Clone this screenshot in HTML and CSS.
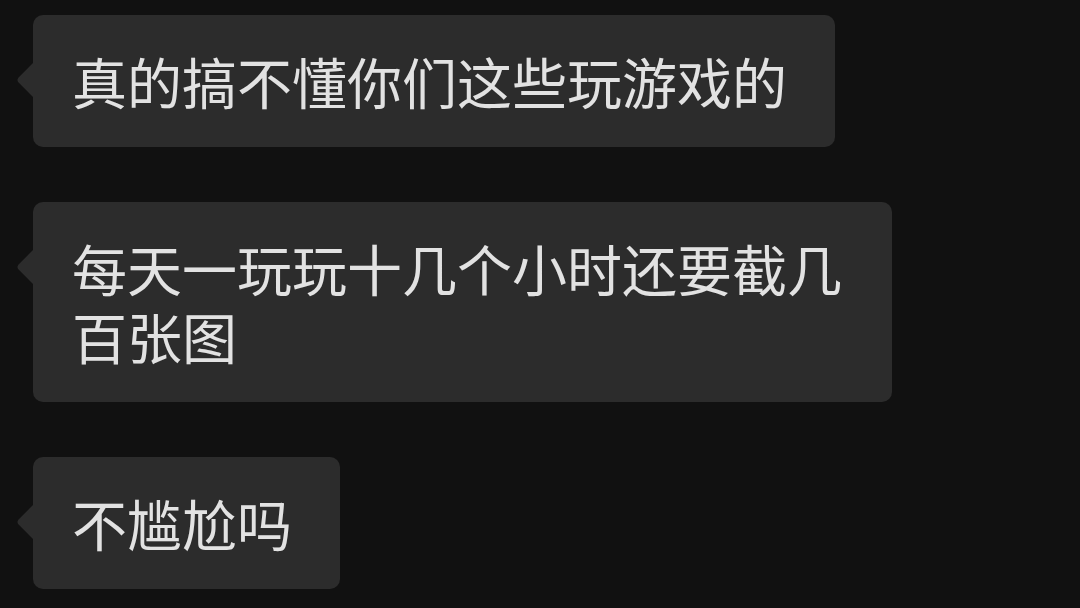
FILE: index.html
```html
<!DOCTYPE html>
<html lang="zh-CN">
<head>
    <meta charset="UTF-8">
    <title>聊天记录</title>
    <link rel="stylesheet" href="styles.css">
</head>
<body>
    <div class="chat">
        <div class="msg">
            <div class="bubble">真的搞不懂你们这些玩游戏的</div>
        </div>
        <div class="msg">
            <div class="bubble">每天一玩玩十几个小时还要截几百张图</div>
        </div>
        <div class="msg">
            <div class="bubble">不尴尬吗</div>
        </div>
    </div>
</body>
</html>
```

FILE: styles.css
```css
body {
    margin: 0;
    background-color: #111111;
    font-family: "Noto Sans CJK SC", "Noto Sans", sans-serif;
    color: #e2e2e2;
}

.chat {
    display: flex;
    flex-direction: column;
    align-items: flex-start;
    gap: 55px;
    padding: 15px 0 0 33px;
}

.msg {
    display: flex;
}

/* incoming message bubble with a small tail on the left */
.bubble {
    position: relative;
    max-width: 772px;
    padding: 31px 48px 33px 39px;
    background-color: #2c2c2c;
    border-radius: 10px;
    font-size: 55px;
    line-height: 68px;
}

.bubble::before {
    content: "";
    position: absolute;
    left: -12px;
    top: 53px;
    width: 24px;
    height: 24px;
    background-color: #2c2c2c;
    border-radius: 0 0 0 4px;
    transform: rotate(45deg);
}
```
